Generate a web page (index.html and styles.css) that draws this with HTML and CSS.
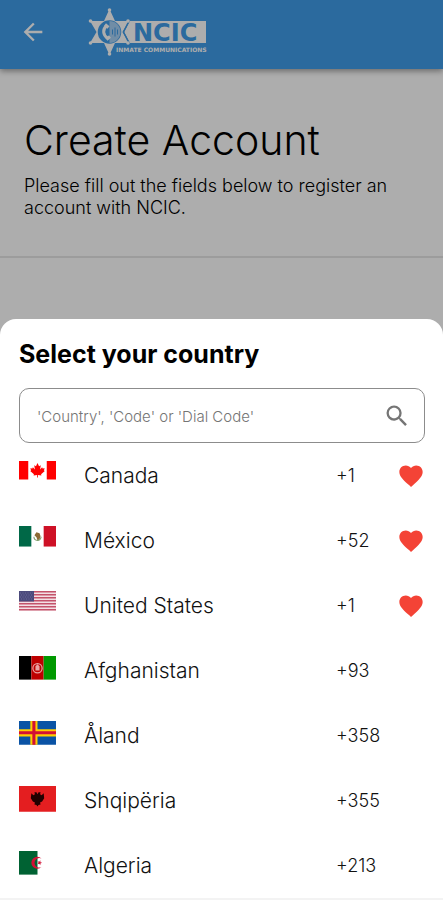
FILE: index.html
```html
<!DOCTYPE html>
<html lang="en">

<head>
  <meta charset="UTF-8" />
  <meta name="viewport" content="width=device-width, initial-scale=1" />
  <title>Create Account</title>
  <link rel="stylesheet" href="styles.css">
</head>

<body>
  <header class="app-bar">
    <button class="back" type="button" aria-label="Back">
      <svg viewBox="0 0 24 24"><path d="M20 11H7.83l5.59-5.59L12 4l-8 8 8 8 1.41-1.41L7.83 13H20v-2z" /></svg>
    </button>
    <svg class="logo" viewBox="0 0 120 52" role="img" aria-label="NCIC Inmate Communications">
      <!-- name plate -->
      <path class="logo-fill" d="M42 15H118V37H42L36 26z" />
      <!-- badge -->
      <path class="logo-fill" d="M21.500 3L27 15 41 15 34.500 26 41 37 27 37 21.500 49 16 37 2 37 8.500 26 2 15 16 15z" />
      <path class="logo-gap" d="M42 13L35.500 26 42 39" />
      <g class="logo-fill">
        <circle cx="21.500" cy="4" r="1.800" /><circle cx="21.500" cy="48" r="1.800" />
        <circle cx="2.500" cy="15" r="1.800" /><circle cx="2.500" cy="37" r="1.800" />
        <circle cx="40" cy="15" r="1.800" /><circle cx="40" cy="37" r="1.800" />
      </g>
      <circle class="logo-ring" cx="21.500" cy="26" r="11" />
      <path class="logo-half" d="M21.500 15a11 11 0 0 1 0 22z" />
      <path class="logo-phone" d="M18.500 20c-4 3-4 9 1.500 12.500" />
      <path class="logo-ear" d="M17 18.500l3.500 3M18.500 33.500l3.500-3" />
      <path class="logo-wave" d="M24.500 23.500v5M27 21.500v9M29.500 23.500v5" />
      <text class="logo-name" x="45" y="35">NCIC</text>
      <text class="logo-sub" x="28" y="46">INMATE COMMUNICATIONS</text>
    </svg>
  </header>

  <main class="intro">
    <h1>Create Account</h1>
    <p>Please fill out the fields below to register an account with NCIC.</p>
  </main>

  <div class="scrim"></div>

  <section class="sheet" role="dialog" aria-labelledby="sheetTitle">
    <h2 id="sheetTitle">Select your country</h2>

    <div class="search">
      <input type="text" id="search" aria-label="Search country" placeholder="'Country', 'Code' or 'Dial Code'" />
      <label for="search" aria-label="Search">
        <svg viewBox="0 0 24 24"><path d="M15.500 14h-.79l-.28-.27A6.471 6.471 0 0 0 16 9.500 6.500 6.500 0 1 0 9.500 16c1.610 0 3.090-.59 4.230-1.570l.27.28v.79l5 4.990L20.490 19l-4.990-5zm-6 0C7.010 14 5 11.990 5 9.500S7.010 5 9.500 5 14 7.010 14 9.500 11.990 14 9.500 14z" /></svg>
      </label>
    </div>

    <ul class="countries">
      <li>
        <button type="button" class="country">
          <svg class="flag" viewBox="0 0 36 18">
            <path fill="#fff" d="M0 0h36v18H0z" />
            <path fill="#f00" d="M0 0h9v18H0zM27 0h9v18h-9z" />
            <path fill="#f00" d="M18 2l1.500 3 1.700-.8-.7 4 2-2 .5 1.200 2-.3-.8 2.100.9.600-3.600 3 .3 1.200-3.400-.4V16h-.8v-2.400l-3.400.4.3-1.200-3.600-3 .9-.6-.8-2.100 2 .3.500-1.200 2 2-.7-4 1.700.8z" />
          </svg>
          <span class="name">Canada</span>
          <span class="dial">+1</span>
          <svg class="heart" viewBox="0 0 24 24"><path d="M12 21.350l-1.450-1.320C5.400 15.360 2 12.280 2 8.500 2 5.420 4.420 3 7.500 3c1.740 0 3.410.81 4.500 2.090C13.090 3.810 14.760 3 16.500 3 19.580 3 22 5.420 22 8.500c0 3.780-3.400 6.860-8.550 11.540z" /></svg>
        </button>
      </li>
      <li>
        <button type="button" class="country">
          <svg class="flag" viewBox="0 0 36 20">
            <path fill="#fff" d="M0 0h36v20H0z" />
            <path fill="#006847" d="M0 0h12v20H0z" />
            <path fill="#ce1126" d="M24 0h12v20H24z" />
            <path fill="#8c6a35" d="M17 6l3 1 1 3-1 3-2 1-1-3-2-2z" />
            <path fill="none" stroke="#7d9c6a" d="M14.500 10.500a3.500 3.500 0 0 0 7 0" />
          </svg>
          <span class="name">México</span>
          <span class="dial">+52</span>
          <svg class="heart" viewBox="0 0 24 24"><path d="M12 21.350l-1.450-1.320C5.400 15.360 2 12.280 2 8.500 2 5.420 4.420 3 7.500 3c1.740 0 3.410.81 4.500 2.090C13.090 3.810 14.760 3 16.500 3 19.580 3 22 5.420 22 8.500c0 3.780-3.400 6.860-8.550 11.540z" /></svg>
        </button>
      </li>
      <li>
        <button type="button" class="country">
          <svg class="flag" viewBox="0 0 37 19.500">
            <path fill="#f3dfe4" d="M0 0h37v19.500H0z" />
            <path stroke="#c4536b" stroke-width="1.500" d="M0 .75h37M0 3.750h37M0 6.750h37M0 9.750h37M0 12.750h37M0 15.750h37M0 18.750h37" />
            <path fill="#4b4a7c" d="M0 0h15v10.500H0z" />
            <path stroke="#6b699a" stroke-dasharray="1 1.500" d="M1 2h13M2 4h12M1 6h13M2 8h12" />
          </svg>
          <span class="name">United States</span>
          <span class="dial">+1</span>
          <svg class="heart" viewBox="0 0 24 24"><path d="M12 21.350l-1.450-1.320C5.400 15.360 2 12.280 2 8.500 2 5.420 4.420 3 7.500 3c1.740 0 3.410.81 4.500 2.090C13.090 3.810 14.760 3 16.500 3 19.580 3 22 5.420 22 8.500c0 3.780-3.400 6.860-8.550 11.540z" /></svg>
        </button>
      </li>
      <li>
        <button type="button" class="country">
          <svg class="flag" viewBox="0 0 36 23">
            <path fill="#000" d="M0 0h12v23H0z" />
            <path fill="#be0000" d="M12 0h12v23H12z" />
            <path fill="#009900" d="M24 0h12v23H24z" />
            <circle cx="18" cy="12" r="4.500" fill="none" stroke="#e9a5a5" stroke-width="1.200" />
            <path fill="#e9a5a5" d="M16 10l2-2 2 2v4h-4z" />
          </svg>
          <span class="name">Afghanistan</span>
          <span class="dial">+93</span>
          <span class="heart"></span>
        </button>
      </li>
      <li>
        <button type="button" class="country">
          <svg class="flag" viewBox="0 0 36 23">
            <path fill="#0a53a5" d="M0 0h36v23H0z" />
            <path fill="#ffce00" d="M11 0h7v23h-7zM0 8h36v7H0z" />
            <path fill="#d21034" d="M13 0h3v23h-3zM0 10h36v3H0z" />
          </svg>
          <span class="name">Åland</span>
          <span class="dial">+358</span>
          <span class="heart"></span>
        </button>
      </li>
      <li>
        <button type="button" class="country">
          <svg class="flag" viewBox="0 0 36 25">
            <path fill="#e41e20" d="M0 0h36v25H0z" />
            <path fill="#200" d="M15 6l2 0 1 2 1-2 2 0-.5 2 1.500 1 2-2 .5 5-2 3-2 1 .5 2-2 .5L18 20l-1-1.500-2-.5.500-2-2-1-2-3 .5-5 2 2 1.500-1z" />
          </svg>
          <span class="name">Shqipëria</span>
          <span class="dial">+355</span>
          <span class="heart"></span>
        </button>
      </li>
      <li>
        <button type="button" class="country">
          <svg class="flag" viewBox="0 0 36 23">
            <path fill="#fff" d="M0 0h36v23H0z" />
            <path fill="#006233" d="M0 0h18v23H0z" />
            <path fill="#d21034" d="M22 7.500a5.800 5.800 0 1 0 0 8 4.600 4.600 0 1 1 0-8z" />
            <path fill="#d21034" d="M22.500 11.500l-1.700.6v1.800l-1.100-1.400-1.700.5 1-1.500-1-1.500 1.700.5 1.100-1.400v1.800z" />
          </svg>
          <span class="name">Algeria</span>
          <span class="dial">+213</span>
          <span class="heart"></span>
        </button>
      </li>
    </ul>
  </section>
</body>

</html>
```

FILE: styles.css
```css
* {
  box-sizing: border-box;
}

body {
  margin: 0;
  min-height: 100vh;
  background: #fff;
  color: #000;
  font-family: Inter, Roboto, sans-serif;
}

h1,
h2,
p,
ul {
  margin: 0;
  padding: 0;
}

button {
  border: none;
  background: none;
  padding: 0;
  font: inherit;
  color: inherit;
  cursor: pointer;
}

svg {
  display: block;
}

.app-bar {
  display: flex;
  align-items: center;
  gap: 41px;
  height: 69px;
  padding: 0 19px 5px;
  background: #409ce9;
  box-shadow: 0 2px 6px rgba(0, 0, 0, 0.4);
}

.back svg {
  width: 28px;
  height: 28px;
  fill: #fff;
}

.logo {
  width: 120px;
  height: 52px;
}

.logo-fill {
  fill: #fff;
}

.logo-gap {
  fill: none;
  stroke: #409ce9;
  stroke-width: 1.5;
}

.logo-ring {
  fill: #409ce9;
  stroke: #409ce9;
  stroke-width: 1.5;
}

.logo-half {
  fill: #a5d0f5;
}

.logo-phone,
.logo-ear {
  fill: none;
  stroke: #fff;
  stroke-width: 3;
}

.logo-wave {
  fill: none;
  stroke: #409ce9;
  stroke-width: 1;
}

.logo-name {
  font: bold 24px "DejaVu Sans", sans-serif;
  fill: #409ce9;
}

.logo-sub {
  font: bold 6px "DejaVu Sans", sans-serif;
  fill: #fff;
}

.intro {
  padding: 47px 24px 37px;
  border-bottom: 2px solid #e6e6e6;
}

.intro h1 {
  font-size: 41px;
  font-weight: 300;
  line-height: 48px;
}

.intro p {
  margin-top: 11px;
  font-size: 18px;
  font-weight: 300;
  line-height: 22px;
}

.scrim {
  position: fixed;
  inset: 0;
  background: rgba(0, 0, 0, 0.32);
}

.sheet {
  position: fixed;
  left: 0;
  right: 0;
  bottom: 0;
  padding: 19px 18px 0 19px;
  border-bottom: 2px solid #f3f3f3;
  border-radius: 16px 16px 0 0;
  background: #fff;
}

.sheet h2 {
  font-size: 25px;
  font-weight: 700;
  line-height: 32px;
}

.search {
  display: flex;
  align-items: center;
  height: 55px;
  margin-top: 18px;
  padding: 0 13px 0 17px;
  border: 1px solid #8c8c8c;
  border-radius: 10px;
}

.search input {
  flex: 1;
  min-width: 0;
  padding: 2px 0 0;
  border: none;
  outline: none;
  background: none;
  font: 300 15px Inter, Roboto, sans-serif;
}

.search input::placeholder {
  color: #757575;
  opacity: 1;
}

.search svg {
  width: 28px;
  height: 28px;
  fill: #757575;
}

.countries {
  list-style: none;
}

.country {
  display: flex;
  align-items: center;
  width: 100%;
  height: 65px;
  text-align: left;
}

.flag {
  align-self: flex-start;
  width: 37px;
  margin: 18px 28px 0 0;
}

.name {
  flex: 1;
  font-size: 21px;
  font-weight: 300;
  color: #111;
}

.dial {
  width: 61px;
  font-size: 18px;
  font-weight: 300;
  color: #111;
}

.heart {
  width: 28px;
  height: 28px;
  fill: #f44336;
}
```
